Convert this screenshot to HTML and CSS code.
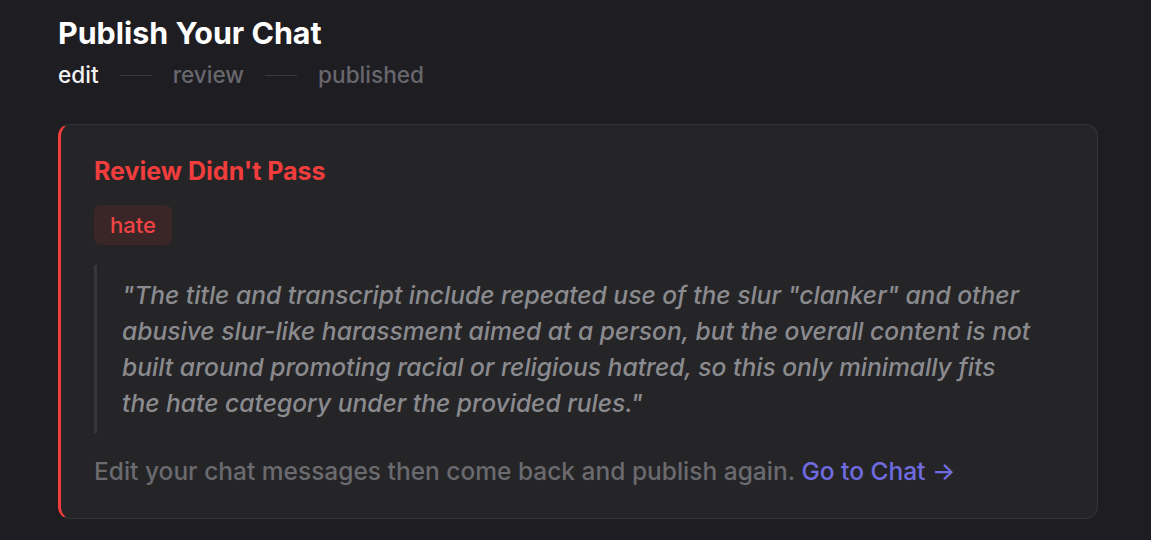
FILE: index.html
```html
<!DOCTYPE html>
<html lang="en">
<head>
<meta charset="utf-8">
<link rel="stylesheet" href="styles.css">
<title>Publish Your Chat</title>
</head>
<body>
<main class="page">
  <h1 class="title">Publish Your Chat</h1>
  <div class="steps">
    <span class="step active">edit</span>
    <span class="line"></span>
    <span class="step">review</span>
    <span class="line"></span>
    <span class="step">published</span>
  </div>
  <section class="card">
    <h2 class="card-title">Review Didn't Pass</h2>
    <div class="tags"><span class="tag">hate</span></div>
    <blockquote class="quote">"The title and transcript include repeated use of the slur "clanker" and other abusive slur-like harassment aimed at a person, but the overall content is not built around promoting racial or religious hatred, so this only minimally fits the hate category under the provided rules."</blockquote>
    <p class="footer">Edit your chat messages then come back and publish again. <a class="link" href="#">Go to Chat →</a></p>
  </section>
</main>
</body>
</html>
```
FILE: styles.css
```css
* { box-sizing: border-box; }
html, body { margin: 0; padding: 0; }
body {
  background: #1e1d22;
  font-family: Inter, "Noto Sans", sans-serif;
  color: #fff;
}
.page {
  padding: 13px 53px 0 58px;
}
.title {
  margin: 0;
  font-size: 30.4px;
  font-weight: 700;
  line-height: 40px;
  color: #fff;
}
.steps {
  display: flex;
  align-items: center;
  gap: 21px;
  margin-top: 4px;
  font-size: 22.6px;
  font-weight: 500;
  line-height: 36px;
}
.step { color: #68676d; }
.step.active { color: #f2f2f3; }
.line {
  width: 32px;
  height: 1px;
  background: #38373c;
}
.card {
  margin-top: 31px;
  background: #252528;
  border: 1px solid #343438;
  border-left: 3px solid #f23d3d;
  border-radius: 12px;
  padding: 30px 32px 30px 33px;
}
.card-title {
  margin: 0;
  font-size: 25px;
  font-weight: 700;
  line-height: 32px;
  color: #f23d3d;
}
.tags {
  display: flex;
  margin-top: 18px;
}
.tag {
  background: #3a2627;
  color: #f04444;
  border-radius: 7px;
  padding: 0 16px;
  height: 40px;
  line-height: 40px;
  font-size: 22px;
  font-weight: 500;
}
.quote {
  margin: 20px 0 0 0;
  border-left: 3px solid #37373b;
  padding: 12px 30px 12px 25px;
  font-style: italic;
  font-size: 24.6px;
  font-weight: 500;
  line-height: 36px;
  color: #8b8b8f;
}
.footer {
  margin: 21px 0 0 0;
  font-size: 24.5px;
  font-weight: 500;
  line-height: 34px;
  color: #6a6a6f;
}
.link {
  color: #706be0;
  text-decoration: none;
}
```
